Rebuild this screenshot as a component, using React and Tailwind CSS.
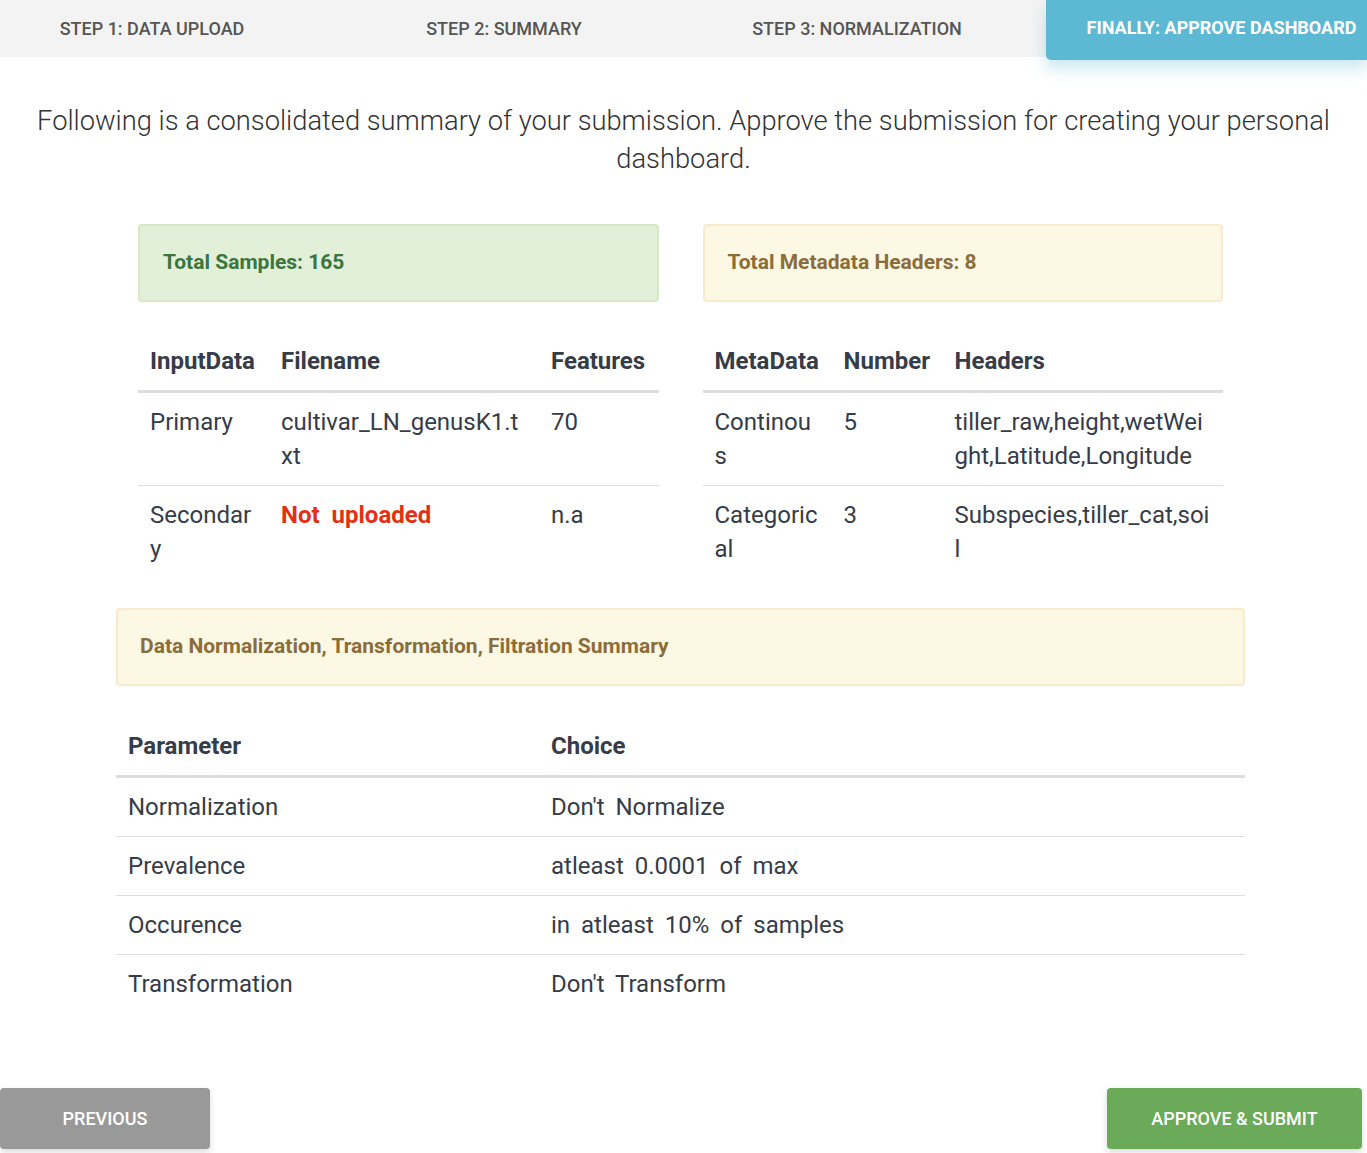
import React from "react";

const FONT = { fontFamily: "Roboto, 'Liberation Sans', sans-serif" };

const TABS = [
  { label: "STEP 1: DATA UPLOAD", w: "w-[304px]" },
  { label: "STEP 2: SUMMARY", w: "w-[400px]" },
  { label: "STEP 3: NORMALIZATION", w: "w-[306px]" },
];

const INPUT_ROWS = [
  { kind: "Primary", file: "cultivar_LN_genusK1.txt", features: "70" },
  { kind: "Secondary", file: null, features: "n.a" },
];

const META_ROWS = [
  { kind: "Continous", num: "5", headers: "tiller_raw,height,wetWeight,Latitude,Longitude" },
  { kind: "Categorical", num: "3", headers: "Subspecies,tiller_cat,soil" },
];

const PARAMS = [
  ["Normalization", "Don't Normalize"],
  ["Prevalence", "atleast 0.0001 of max"],
  ["Occurence", "in atleast 10% of samples"],
  ["Transformation", "Don't Transform"],
];

function Th({ children, className = "" }) {
  return (
    <th className={`px-3 pt-3 pb-3 text-left align-bottom font-bold leading-[34px] border-b-[3px] border-[#ddd] ${className}`}>
      {children}
    </th>
  );
}

function Td({ children, className = "", border = true }) {
  return (
    <td className={`px-3 py-3 align-top leading-[34px] break-all ${border ? "border-t border-[#ddd]" : ""} ${className}`}>
      {children}
    </td>
  );
}

export default function App() {
  return (
    <div className="min-h-[1153px] bg-white text-[#333]" style={FONT}>
      {/* Step tabs */}
      <div className="h-[57px] bg-[#f3f3f3] flex items-start relative">
        {TABS.map((t) => (
          <div key={t.label} className={`${t.w} h-[57px] flex items-center justify-center text-[18px] font-medium text-[#555]`}>
            {t.label}
          </div>
        ))}
        <div className="ml-auto w-[321px] h-[60px] bg-[#5db8d4] rounded-bl-[5px] shadow-[0_8px_16px_rgba(93,184,212,0.35)] flex items-center justify-center pl-[30px] pb-[5px] text-[18px] font-bold text-white z-10">
          FINALLY: APPROVE DASHBOARD
        </div>
      </div>

      {/* Intro */}
      <p className="mt-[45px] px-[20px] text-center text-[27.3px] font-light leading-[38px] text-[#333]">
        Following is a consolidated summary of your submission. Approve the submission for creating your personal dashboard.
      </p>

      <div className="w-[1129px] ml-[116px] mt-[46px] text-[#363c48]">
        <div className="grid grid-cols-2">
          {/* Left column */}
          <div className="px-[22px]">
            <div className="h-[78px] flex items-center px-[23px] rounded-[4px] border-2 border-[#d6e9c6] bg-[#e2efd9] text-[#3c763d] text-[21px] font-bold">
              Total Samples: 165
            </div>
            <table className="mt-[30px] w-full table-fixed text-[24px] border-collapse">
              <colgroup>
                <col className="w-[131px]" />
                <col className="w-[270px]" />
                <col />
              </colgroup>
              <thead>
                <tr>
                  <Th>InputData</Th>
                  <Th>Filename</Th>
                  <Th>Features</Th>
                </tr>
              </thead>
              <tbody>
                {INPUT_ROWS.map((r, i) => (
                  <tr key={r.kind}>
                    <Td border={i > 0}>{r.kind}</Td>
                    <Td border={i > 0}>
                      {r.file ? r.file : <span className="font-bold text-[#e52f14] [word-spacing:6px]">Not uploaded</span>}
                    </Td>
                    <Td border={i > 0}>{r.features}</Td>
                  </tr>
                ))}
              </tbody>
            </table>
          </div>

          {/* Right column */}
          <div className="px-[22px]">
            <div className="h-[78px] flex items-center px-[23px] rounded-[4px] border-2 border-[#faebcc] bg-[#fcf8e3] text-[#8a6d3b] text-[21px] font-bold">
              Total Metadata Headers: 8
            </div>
            <table className="mt-[30px] w-full table-fixed text-[24px] border-collapse">
              <colgroup>
                <col className="w-[129px]" />
                <col className="w-[111px]" />
                <col />
              </colgroup>
              <thead>
                <tr>
                  <Th>MetaData</Th>
                  <Th>Number</Th>
                  <Th>Headers</Th>
                </tr>
              </thead>
              <tbody>
                {META_ROWS.map((r, i) => (
                  <tr key={r.kind}>
                    <Td border={i > 0}>{r.kind}</Td>
                    <Td border={i > 0}>{r.num}</Td>
                    <Td border={i > 0}>{r.headers}</Td>
                  </tr>
                ))}
              </tbody>
            </table>
          </div>
        </div>

        {/* Normalization summary */}
        <div className="mt-[30px] h-[78px] flex items-center px-[22px] rounded-[4px] border-2 border-[#faebcc] bg-[#fcf8e3] text-[#8a6d3b] text-[21px] font-bold">
          Data Normalization, Transformation, Filtration Summary
        </div>
        <table className="mt-[31px] w-full table-fixed text-[24px] border-collapse">
          <colgroup>
            <col className="w-[423px]" />
            <col />
          </colgroup>
          <thead>
            <tr>
              <Th>Parameter</Th>
              <Th>Choice</Th>
            </tr>
          </thead>
          <tbody>
            {PARAMS.map(([p, c], i) => (
              <tr key={p}>
                <td className={`px-3 py-3 leading-[34px] ${i > 0 ? "border-t border-[#ddd]" : ""}`}>{p}</td>
                <td className={`px-3 py-3 leading-[34px] [word-spacing:5px] ${i > 0 ? "border-t border-[#ddd]" : ""}`}>{c}</td>
              </tr>
            ))}
          </tbody>
        </table>
      </div>

      {/* Footer buttons */}
      <div className="mt-[75px] flex justify-between pr-[5px]">
        <button className="w-[210px] h-[61px] rounded-[4px] bg-[#999] text-white text-[18px] font-medium shadow-[0_3px_6px_rgba(0,0,0,0.15)]">
          PREVIOUS
        </button>
        <button className="w-[255px] h-[61px] rounded-[4px] bg-[#6aaa58] text-white text-[18px] font-medium shadow-[0_3px_6px_rgba(0,0,0,0.15)]">
          APPROVE &amp; SUBMIT
        </button>
      </div>
    </div>
  );
}
